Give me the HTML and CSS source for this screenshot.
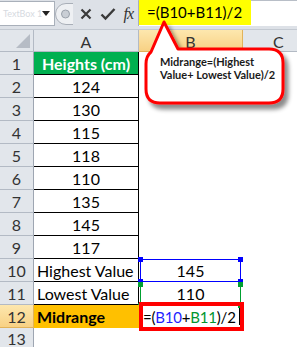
FILE: index.html
```html
<!DOCTYPE html>
<html>

<head>
	<meta charset="utf-8">
	<title>Midrange</title>
	<link rel="stylesheet" href="styles.css">
</head>

<body>
	<div id="app">
		<div class="formula-bar">
			<div class="name-box">
				<span class="name-text">TextBox 1</span>
				<span class="drop"></span>
			</div>
			<div class="splitter">
				<svg width="18" height="22" viewBox="0 0 18 22">
					<path d="M18 0.5 H11 A10.5 10.5 0 0 0 11 21.5 H18" fill="#eef0f3" stroke="#a9afb8" />
					<circle cx="10.5" cy="11" r="4" fill="#c9ced5" stroke="#9aa1ab" />
				</svg>
			</div>
			<div class="fx-buttons">
				<svg class="ico" width="14" height="14" viewBox="0 0 14 14">
					<path d="M2.5 2.5 L11.5 11.5 M11.5 2.5 L2.5 11.5" stroke="#3a3a3a" stroke-width="2.2" />
				</svg>
				<svg class="ico" width="16" height="14" viewBox="0 0 16 14">
					<path d="M1.5 7.5 L5.5 11.5 L14.5 2" fill="none" stroke="#3a3a3a" stroke-width="2.4" />
				</svg>
				<span class="fx">fx</span>
			</div>
			<div class="formula-input">
				<span class="hl">=(B10+B11)/2</span>
			</div>
		</div>

		<div class="sheet">
			<div class="corner"><span class="tri"></span></div>
			<div class="col-head">A</div>
			<div class="col-head sel">B</div>
			<div class="col-head last">C</div>

			<div class="row-head">1</div>
			<div class="cell tbl title">Heights (cm)</div>
			<div class="cell"></div>
			<div class="cell"></div>

			<div class="row-head">2</div>
			<div class="cell tbl">124</div>
			<div class="cell"></div>
			<div class="cell"></div>

			<div class="row-head">3</div>
			<div class="cell tbl">130</div>
			<div class="cell"></div>
			<div class="cell"></div>

			<div class="row-head">4</div>
			<div class="cell tbl">115</div>
			<div class="cell"></div>
			<div class="cell"></div>

			<div class="row-head">5</div>
			<div class="cell tbl">118</div>
			<div class="cell"></div>
			<div class="cell"></div>

			<div class="row-head">6</div>
			<div class="cell tbl">110</div>
			<div class="cell"></div>
			<div class="cell"></div>

			<div class="row-head">7</div>
			<div class="cell tbl">135</div>
			<div class="cell"></div>
			<div class="cell"></div>

			<div class="row-head">8</div>
			<div class="cell tbl">145</div>
			<div class="cell"></div>
			<div class="cell"></div>

			<div class="row-head">9</div>
			<div class="cell tbl">117</div>
			<div class="cell"></div>
			<div class="cell"></div>

			<div class="row-head">10</div>
			<div class="cell tbl left">Highest Value</div>
			<div class="cell ref ref-blue">145
				<span class="hd hd-tl"></span><span class="hd hd-tr"></span>
				<span class="hd hd-bl"></span><span class="hd hd-br"></span>
			</div>
			<div class="cell"></div>

			<div class="row-head">11</div>
			<div class="cell tbl left">Lowest Value</div>
			<div class="cell ref ref-green">110
				<span class="hd hd-tl"></span><span class="hd hd-tr"></span>
				<span class="hd hd-bl"></span><span class="hd hd-br"></span>
			</div>
			<div class="cell"></div>

			<div class="row-head sel">12</div>
			<div class="cell mid">Midrange</div>
			<div class="cell active">
				<span class="frm">=(<span class="c-blue">B10</span>+<span class="c-green">B11</span>)/2</span><span class="caret"></span>
				<span class="sel-box"></span>
			</div>
			<div class="cell"></div>

			<div class="row-head last-row">13</div>
			<div class="cell"></div>
			<div class="cell"></div>
			<div class="cell"></div>
		</div>

		<!-- callout over the sheet -->
		<svg class="callout" width="297" height="347" viewBox="0 0 297 347">
			<defs>
				<filter id="shade" x="-10%" y="-10%" width="130%" height="140%">
					<feDropShadow dx="4" dy="5" stdDeviation="2.2" flood-color="#000" flood-opacity="0.45" />
				</filter>
			</defs>
			<path d="M178 49 L269 49 Q283 49 283 63 L283 89 Q283 103 269 103 L160 103 Q146 103 146 89 L146 64 Q146 56 151 52 L164 22 Z"
				fill="#fff" stroke="#f00" stroke-width="3" stroke-linejoin="round" filter="url(#shade)" />
		</svg>
		<div class="callout-text">Midrange=(Highest<br>Value+ Lowest Value)/2</div>
	</div>
</body>

</html>
```

FILE: styles.css
```css
* {
	margin: 0;
	padding: 0;
	box-sizing: border-box;
}

body {
	background: #fff;
	font-family: Lato, "Liberation Sans", sans-serif;
}

#app {
	width: 297px;
	height: 347px;
	position: relative;
	overflow: hidden;
	background: #fff;
}

/* formula bar */
.formula-bar {
	height: 30px;
	display: flex;
	align-items: flex-start;
	background: #dde1e7;
	border-bottom: 1px solid #c3c9d1;
}

.name-box {
	width: 55px;
	height: 25px;
	margin-top: 1px;
	background: #fff;
	border: 1px solid #a9b0ba;
	border-left: none;
	display: flex;
	align-items: center;
	justify-content: space-between;
	padding: 0 6px 0 3px;
	overflow: hidden;
}

.name-text {
	font-size: 9px;
	color: #d6dadf;
	white-space: nowrap;
}

.drop {
	flex: none;
	width: 0;
	height: 0;
	border-left: 4px solid transparent;
	border-right: 4px solid transparent;
	border-top: 5px solid #222;
}

.splitter {
	height: 26px;
	display: flex;
	align-items: center;
	margin-top: 1px;
}

.fx-buttons {
	width: 65px;
	height: 27px;
	display: flex;
	align-items: center;
	justify-content: space-between;
	padding: 0 5px 0 6px;
}

.fx {
	font-family: "Liberation Serif", serif;
	font-style: italic;
	font-size: 16px;
	color: #333;
	letter-spacing: -1px;
}

.formula-input {
	flex: 1;
	height: 26px;
	background: #fff;
	border-left: 1px solid #a9b0ba;
	border-top: 1px solid #b8bec7;
}

.formula-input .hl {
	display: inline-block;
	height: 25px;
	margin-top: -1px;
	padding: 0 9px 0 8px;
	background: #ffff00;
	font-size: 15px;
	line-height: 25px;
	color: #000;
}

/* sheet grid */
.sheet {
	display: grid;
	grid-template-columns: 34px 105px 104px 54px;
	grid-template-rows: 22px repeat(12, 23px) 19px;
	font-size: 16px;
}

.corner,
.col-head,
.row-head {
	background: #e2e6eb;
	border-right: 1px solid #b3bac4;
	border-bottom: 1px solid #b3bac4;
	color: #333;
	display: flex;
	align-items: center;
	justify-content: center;
}

.corner {
	align-items: flex-end;
	justify-content: flex-end;
	padding: 0 3px 3px 0;
}

.tri {
	width: 0;
	height: 0;
	border-left: 14px solid transparent;
	border-bottom: 14px solid #b6bcc5;
}

.col-head {
	font-size: 16px;
	padding-top: 1px;
}

.col-head.last {
	justify-content: flex-start;
	padding-left: 30px;
	border-right: none;
}

.row-head {
	font-size: 16px;
	border-right-color: #9ea6b2;
}

.row-head.last-row {
	align-items: flex-start;
	padding-top: 1px;
	border-bottom: none;
}

.col-head.sel,
.row-head.sel {
	background: linear-gradient(#fde7ae, #f8d184);
	border-color: #e2b35a;
}

.cell {
	display: flex;
	align-items: center;
	justify-content: center;
	color: #000;
	white-space: nowrap;
	position: relative;
}

.cell.tbl {
	border-right: 1px solid #000;
	border-bottom: 1px solid #000;
}

.cell.left {
	justify-content: flex-start;
	padding-left: 3px;
}

.cell.title {
	background: #00b050;
	color: #fff;
	font-weight: 700;
}

.cell.mid {
	background: #ffc000;
	font-weight: 700;
	justify-content: flex-start;
	padding-left: 3px;
}

/* range references while editing */
.ref {
	margin: 0 2px 0 1px;
}

.ref-blue {
	border: 1px solid #0000ff;
}

.ref-green {
	border-left: 1px solid #00a030;
	border-right: 1px solid #00a030;
}

.hd {
	position: absolute;
	width: 5px;
	height: 5px;
}

.ref-blue .hd {
	background: #0000ff;
}

.ref-green .hd {
	background: #00a030;
}

.hd-tl {
	top: -3px;
	left: -3px;
}

.hd-tr {
	top: -3px;
	right: -3px;
}

.hd-bl {
	bottom: -3px;
	left: -3px;
}

.hd-br {
	bottom: -3px;
	right: -3px;
}

.ref-green .hd-tl,
.ref-green .hd-tr {
	top: 0;
}

.cell.active {
	justify-content: flex-start;
	padding-left: 4px;
	font-size: 15px;
	letter-spacing: -0.2px;
}

.c-blue {
	color: #1f1fff;
}

.c-green {
	color: #00952e;
}

.caret {
	width: 1px;
	height: 17px;
	background: #000;
	margin-left: 3px;
}

.sel-box {
	position: absolute;
	top: -3px;
	bottom: -3px;
	left: 0;
	right: -1px;
	border: 4px solid #f00;
}

/* callout */
.callout {
	position: absolute;
	left: 0;
	top: 0;
}

.callout-text {
	position: absolute;
	left: 160px;
	top: 55px;
	font-size: 11px;
	font-weight: 700;
	line-height: 13px;
	color: #1a1a1a;
}
```
